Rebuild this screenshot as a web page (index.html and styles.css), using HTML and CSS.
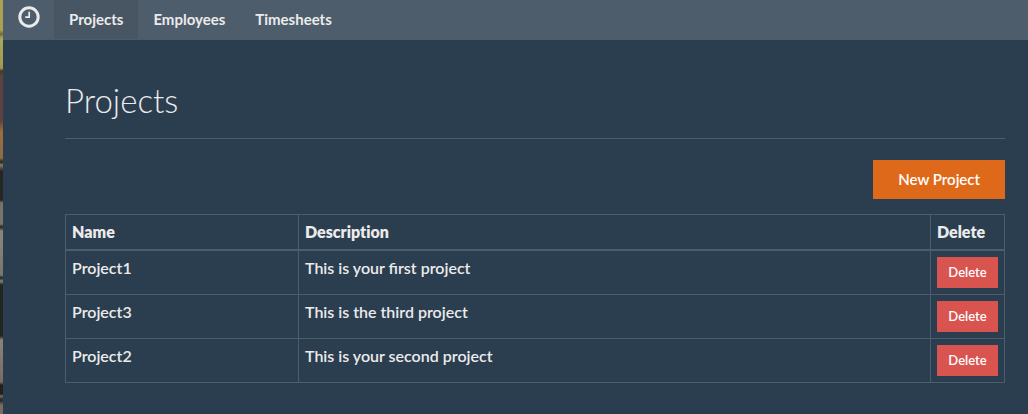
FILE: index.html
```html
<!DOCTYPE html>
<html lang="en">
<head>
<meta charset="utf-8">
<meta name="viewport" content="width=device-width, initial-scale=1">
<title>Projects</title>
<link rel="stylesheet" href="styles.css">
</head>
<body>
<div class="backdrop" aria-hidden="true"></div>
<div class="app">
  <nav class="navbar">
    <a class="brand" href="#" aria-label="Home">
      <svg class="brand-icon" viewBox="0 0 22 22" fill="none" stroke="currentColor">
        <circle cx="11" cy="11" r="9.2" stroke-width="3"/>
        <path d="M11.2 5.8V11.2H7.2" stroke-width="1.7"/>
      </svg>
    </a>
    <a class="nav-link active" href="#projects" aria-current="page">Projects</a>
    <a class="nav-link" href="#employees">Employees</a>
    <a class="nav-link" href="#timesheets">Timesheets</a>
  </nav>
  <main class="content">
    <h1 class="title">Projects</h1>
    <div class="toolbar">
      <button class="btn btn-primary" type="button">New Project</button>
    </div>
    <table class="table">
      <colgroup><col class="col-name"><col><col class="col-action"></colgroup>
      <thead>
        <tr><th scope="col">Name</th><th scope="col">Description</th><th scope="col">Delete</th></tr>
      </thead>
      <tbody>
        <tr><td>Project1</td><td>This is your first project</td><td><button class="btn btn-danger" type="button">Delete</button></td></tr>
        <tr><td>Project3</td><td>This is the third project</td><td><button class="btn btn-danger" type="button">Delete</button></td></tr>
        <tr><td>Project2</td><td>This is your second project</td><td><button class="btn btn-danger" type="button">Delete</button></td></tr>
      </tbody>
    </table>
  </main>
</div>
</body>
</html>
```

FILE: styles.css
```css
* { box-sizing: border-box; }

body {
  margin: 0;
  min-height: 100vh;
  display: flex;
  background: #2b3e50;
  color: #ebebeb;
  font: 600 15px/22px Lato, "Liberation Sans", sans-serif;
}

.backdrop {
  flex: 0 0 3px;
  background: linear-gradient(
    #a9a255 0, #a9a255 30px, #6d6a35 34px, #aaa65a 38px, #a09a50 68px,
    #4a3a28 71px, #5d4240 76px, #5d4240 120px, #a06c3c 132px, #8d6b45 158px,
    #25221f 162px, #857a68 165px, #262626 171px, #262626 200px,
    #77746a 203px, #77746a 224px, #25251f 227px, #88877a 231px, #77776a 275px,
    #22221f 278px, #85857a 281px, #222522 285px, #222522 336px,
    #8a8378 340px, #776c62 382px, #22201f 385px, #22201f 394px,
    #776c62 396px, #22201f 400px, #776c62 405px, #776c62 100%);
}

.app { flex: 1; min-width: 0; }

.navbar {
  display: flex;
  height: 40px;
  padding-bottom: 1px;
  background: #4e5d6c;
}

.brand {
  display: flex;
  padding: 6px 14px 0 15px;
  color: #ebebeb;
}

.brand-icon { width: 22px; height: 22px; }

.nav-link {
  padding: 8px 15px 9px;
  color: #ebebeb;
  font-weight: 700;
  text-decoration: none;
}

.nav-link.active { background: #485563; }

.content { padding: 40px 23px 30px 62px; }

.title {
  margin: 0 0 21px;
  padding-bottom: 18px;
  border-bottom: 1px solid #4e5d6c;
  font-size: 33px;
  font-weight: 300;
  line-height: 40px;
}

.toolbar {
  display: flex;
  justify-content: flex-end;
  margin-bottom: 15px;
}

.btn {
  display: block;
  border: 0;
  color: #fff;
  font: inherit;
  cursor: pointer;
}

.btn-primary { padding: 8px 25px 9px; background: #df691a; }

.btn-danger {
  width: 100%;
  padding: 6px 8px 7px;
  background: #d9534f;
  font-size: 13px;
  line-height: 18px;
}

.table {
  width: 100%;
  table-layout: fixed;
  border-collapse: collapse;
  font-size: 16px;
}

.col-name { width: 233px; }
.col-action { width: 74px; }

.table th,
.table td {
  padding: 6px;
  border: 1px solid #4e5d6c;
  text-align: left;
  vertical-align: top;
}

.table th {
  border-bottom-width: 2px;
  font-weight: 800;
  font-variant-ligatures: none;
}
```
